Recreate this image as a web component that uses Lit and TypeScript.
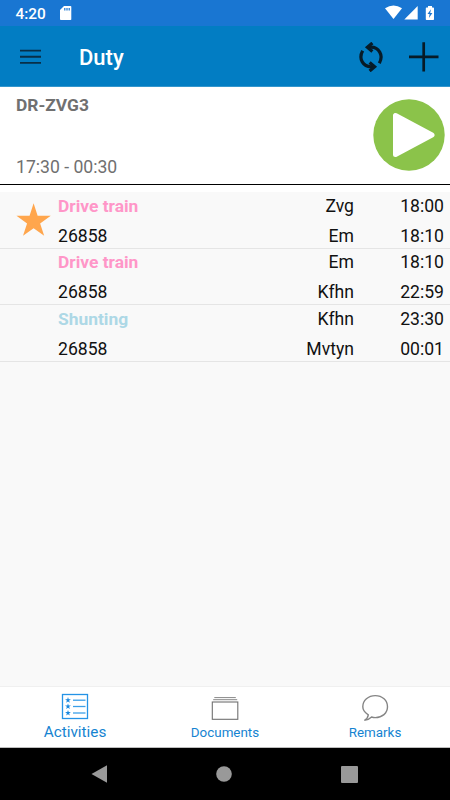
import { LitElement, html, css, svg } from "lit";
import { customElement } from "lit/decorators.js";

interface Activity {
  kind: string;
  tone: "drive" | "shunt";
  train: string;
  from: string;
  start: string;
  to: string;
  end: string;
  starred?: boolean;
}

const activities: Activity[] = [
  { kind: "Drive train", tone: "drive", train: "26858", from: "Zvg", start: "18:00", to: "Em", end: "18:10", starred: true },
  { kind: "Drive train", tone: "drive", train: "26858", from: "Em", start: "18:10", to: "Kfhn", end: "22:59" },
  { kind: "Shunting", tone: "shunt", train: "26858", from: "Kfhn", start: "23:30", to: "Mvtyn", end: "00:01" },
];

const STAR = "M0-1 .2245-.309 .9511-.309 .3633.118 .5878.809 0 .382-.5878.809-.3633.118-.9511-.309-.2245-.309Z";

@customElement("app-root")
export class AppRoot extends LitElement {
  static styles = css`
    :host {
      display: flex;
      flex-direction: column;
      width: 450px;
      height: 800px;
      overflow: hidden;
      background: #f9f9f9;
      color: #111;
      font: 17.6px/20px Roboto, sans-serif;
    }
    svg { display: block; flex: none; }
    .status {
      height: 26px;
      flex: none;
      display: flex;
      align-items: center;
      background: #1976d2;
      color: #fff;
      box-sizing: border-box;
      padding: 0 15px 0 15.5px;
      font-size: 15.4px;
      font-weight: 500;
    }
    .clock { width: 44.5px; padding-top: 2px; }
    .signals { margin-left: auto; }
    .header {
      height: 61px;
      flex: none;
      display: flex;
      align-items: center;
      box-sizing: border-box;
      padding: 1px 11px 0 20px;
      background: #027dc3;
      border-bottom: 1px solid #3496cd;
    }
    .title {
      margin-left: 38px;
      padding-top: 2px;
      color: #fff;
      font-size: 22px;
      line-height: 26px;
      font-weight: 500;
    }
    .tools { display: flex; align-items: center; margin-left: auto; gap: 26px; }
    .duty {
      height: 98px;
      flex: none;
      box-sizing: border-box;
      display: flex;
      justify-content: space-between;
      background: #fff;
      border-bottom: 1px solid #000;
      padding: 8px 5px 7px 16px;
      color: #707070;
    }
    .info { display: flex; flex-direction: column; justify-content: space-between; }
    .code { font-weight: 700; font-size: 17.4px; }
    .play { margin-top: 4px; }
    .list { flex: 1; border-top: 7px solid #fff; }
    .row {
      height: 56.5px;
      box-sizing: border-box;
      border-bottom: 1px solid #e5e5e5;
      display: grid;
      grid-template-columns: 58px 1fr 100px 90px;
      grid-template-rows: 30px 20px;
      padding: 3.9px 6px 0 0;
    }
    .star { grid-row: 1 / 3; padding: 7px 0 0 16px; }
    .right { text-align: right; }
    .kind { font-weight: 700; font-size: 17.4px; }
    .drive { color: #ff96c8; }
    .shunt { color: #add8e6; }
    .tabs {
      height: 62px;
      flex: none;
      box-sizing: border-box;
      display: grid;
      grid-template-columns: repeat(3, 1fr);
      background: #fff;
      border-top: 1px solid #f0f0f0;
      border-bottom: 1px solid #bdbdbd;
      color: #1583d1;
      font-size: 13.4px;
      line-height: 18px;
    }
    .tab { display: flex; flex-direction: column; align-items: center; padding-top: 7px; }
    .label { margin-top: 2px; }
    .active .label { font-size: 15.3px; margin-top: 1px; }
    .active svg { margin-top: -1px; margin-bottom: 1px; }
    .system {
      height: 52px;
      flex: none;
      display: flex;
      justify-content: space-between;
      align-items: center;
      box-sizing: border-box;
      padding: 0 92.5px 0 91px;
      background: #000;
    }
  `;

  private activitiesIcon() {
    return svg`<svg width="28" height="28" viewBox="0 0 28 28">
      <rect x="1.5" y="1.5" width="25" height="24" fill="#fff" stroke="#2493e6" stroke-width="1.3"/>
      ${[7.2, 13.5, 20].map(
        (y) => svg`<path d=${STAR} transform="translate(7 ${y}) scale(3.1)" fill="#1687df"/>
        <path d="M12 ${y}h12.5" stroke="#3c9fe8" stroke-width="1.3"/>`,
      )}
    </svg>`;
  }

  private documentsIcon() {
    return svg`<svg width="28" height="28" viewBox="0 0 28 28">
      <path d="M3.3 3.6h21.5M2.2 5.7h24" stroke="#888" stroke-width="1"/>
      <rect x="1.3" y="8" width="25.5" height="17.3" fill="none" stroke="#707070" stroke-width="1.1"/>
    </svg>`;
  }

  private remarksIcon() {
    return svg`<svg width="28" height="28" viewBox="0 0 28 28">
      <path d="M7.3 20.8C3.7 18.6 1.8 16 1.8 12.8 1.8 6.3 7.3 1.6 14.3 1.6s12.2 4.7 12.2 11.2-5.4 10.8-12.2 10.8c-1.4 0-2.5-.2-3.7-.6-2.1 2.1-4.2 3.2-7.2 3.3 2.4-1.3 3.6-2.9 3.9-5.5Z" fill="#fff" stroke="#858585" stroke-width="1.4"/>
    </svg>`;
  }

  render() {
    return html`
      <div class="status">
        <span class="clock">4:20</span>
        <svg width="12" height="14" viewBox="0 0 12 14">
          <path d="M4 0h6.5Q11.3 0 11.3.8v12.4q0 .8-.8.8H.9Q0 14 0 13.2V4Z" fill="#fff"/>
          <path d="M4.8 2v2.5M7 2v2.5M9.2 2v2.5" stroke="#1976d2" stroke-width="1.2"/>
        </svg>
        <svg class="signals" width="51" height="16" viewBox="0 0 51 16">
          <path d="M1 3.2Q9.5-2.2 18 3.2L9.5 14Z" fill="#fff"/>
          <path d="M33.7 1v13.5H20.3Z" fill="#fff"/>
          <path d="M44 1h4v1.4h1.2q.8 0 .8.8v11q0 .8-.8.8h-6.6q-.8 0-.8-.8v-11q0-.8.8-.8H44Z" fill="#fff"/>
          <path d="M47 4.3 43.5 9h2.1l-.7 4L48.4 8h-2.2Z" fill="#1976d2"/>
        </svg>
      </div>
      <div class="header">
        <svg width="21" height="16" viewBox="0 0 21 16">
          <path d="M0 1.6h21M0 7.8h21M0 13.9h21" stroke="#082f48" stroke-width="1.9"/>
        </svg>
        <span class="title">Duty</span>
        <div class="tools">
          <svg width="24" height="30" viewBox="0 0 24 30">
            <g fill="none" stroke="#071b27" stroke-width="3.2">
              <path d="M9 5.2h3C19.5 5.2 25 13 20.3 21.2"/>
              <path d="M15 24.8h-3C4.5 24.8-1 17 3.7 8.8"/>
              <path d="m13.4 1-5 4.2 5 4.2M10.6 29l5-4.2-5-4.2"/>
            </g>
          </svg>
          <svg width="30" height="30" viewBox="0 0 30 30">
            <path d="M0 14.8h29.5M14.7.2v29.3" stroke="#071b27" stroke-width="2.7"/>
          </svg>
        </div>
      </div>
      <div class="duty">
        <div class="info">
          <span class="code">DR-ZVG3</span>
          <span>17:30 - 00:30</span>
        </div>
        <svg class="play" width="72" height="72" viewBox="0 0 72 72">
          <circle cx="36" cy="36" r="35.7" fill="#8bc34a"/>
          <path d="M22.5 16.5v39L59 36Z" fill="#fff" stroke="#fff" stroke-width="5" stroke-linejoin="round"/>
        </svg>
      </div>
      <div class="list">
        ${activities.map(
          (a) => html`<div class="row">
            <div class="star">
              ${a.starred
                ? html`<svg width="36" height="34" viewBox="0 0 36 34">
                    <path d=${STAR} transform="translate(17.6 18.3) scale(18)" fill="#ffa64d"/>
                  </svg>`
                : ""}
            </div>
            <span class="kind ${a.tone}">${a.kind}</span>
            <span class="right">${a.from}</span>
            <span class="right">${a.start}</span>
            <span>${a.train}</span>
            <span class="right">${a.to}</span>
            <span class="right">${a.end}</span>
          </div>`,
        )}
      </div>
      <div class="tabs">
        <div class="tab active">${this.activitiesIcon()}<span class="label">Activities</span></div>
        <div class="tab">${this.documentsIcon()}<span class="label">Documents</span></div>
        <div class="tab">${this.remarksIcon()}<span class="label">Remarks</span></div>
      </div>
      <div class="system">
        <svg width="17" height="20" viewBox="0 0 17 20"><path d="M.5 10 16 1.3v17.4Z" fill="#999"/></svg>
        <svg width="16" height="16" viewBox="0 0 16 16"><circle cx="8" cy="8" r="7.8" fill="#999"/></svg>
        <svg width="17" height="17" viewBox="0 0 17 17"><rect width="17" height="17" rx="1" fill="#999"/></svg>
      </div>
    `;
  }
}
